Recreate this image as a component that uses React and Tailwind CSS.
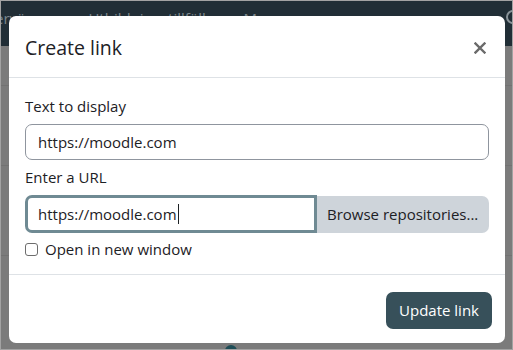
import React from "react";

// Moodle-style "Create link" modal shown over a dimmed course page
function App() {
  const font = { fontFamily: '"Open Sans", "Noto Sans", sans-serif' };

  return (
    <div
      className="relative w-[513px] h-[350px] overflow-hidden bg-[#7b7b7b] border border-[#a3a3a3]"
      style={font}
    >
      {/* Dimmed navbar behind the backdrop */}
      <div className="h-[45px] bg-[#212e36] flex items-start pt-[6px] text-[15px] text-[#7d878c] whitespace-nowrap">
        <span className="-ml-[6px]">ervägare</span>
        <span className="ml-[32px]">Utbildningstillfällen</span>
        <span className="ml-[20px]">Mer</span>
        <span className="ml-auto mr-[-8px] mt-[3px] w-[14px] h-[14px] rounded-full border-2 border-[#8a9499]" />
      </div>

      {/* Dimmed page content */}
      <div className="h-[40px] border-b border-[#727272]" />
      <div className="h-[80px] border-b border-[#727272]" />
      <div className="h-[90px] border-b border-[#727272]" />

      {/* Modal dialog */}
      <div className="absolute left-[8px] top-[15px] w-[496px] h-[327px] bg-white rounded-[7px] flex flex-col text-[#1d2125]">
        {/* Header */}
        <div className="h-[62px] shrink-0 flex items-center justify-between pl-4 pr-[19px] border-b border-[#dee2e6]">
          <h2 className="text-[19.5px] leading-none pt-[2px]">Create link</h2>
          <svg width="12" height="12" viewBox="0 0 12 12" className="mt-[2px]">
            <path d="M1.5 1.5 L10.5 10.5 M10.5 1.5 L1.5 10.5" stroke="#6a6a6a" strokeWidth="2.4" strokeLinecap="square" />
          </svg>
        </div>

        {/* Body */}
        <div className="px-4 pt-[17px] pb-[15px] border-b border-[#dee2e6] flex flex-col">
          <label className="h-[22px] text-[15px] leading-[22px]">Text to display</label>
          <div className="mt-[7px] h-[36px] w-full rounded-[7px] border border-[#8f959e] flex items-center pl-[12px] text-[15px]">
            https://moodle.com
          </div>
          <label className="mt-[6px] h-[22px] text-[15px] leading-[22px]">Enter a URL</label>
          <div className="mt-[7px] h-[38px] flex">
            <div className="w-[292px] h-full rounded-l-[7px] border-[3px] border-[#6f8a93] flex items-center pl-[10px] text-[15px]">
              https://moodle.com
              <span className="ml-[1px] w-[1px] h-[20px] bg-[#1d2125]" />
            </div>
            <div className="flex-1 h-[37px] mt-[1px] bg-[#ced4da] rounded-r-[7px] flex items-center pl-[10px] text-[15px]">
              Browse repositories...
            </div>
          </div>
          <div className="mt-[6px] h-[20px] flex items-center gap-[7px] text-[15px]">
            <span className="w-[13px] h-[13px] rounded-[3px] border border-[#6d6d6d] bg-white" />
            <span className="leading-none">Open in new window</span>
          </div>
        </div>

        {/* Footer */}
        <div className="flex-1 flex justify-end items-start pt-[17px] pr-[13px]">
          <button className="h-[37px] px-[13px] rounded-[7px] bg-[#37505a] text-white text-[15px]">
            Update link
          </button>
        </div>
      </div>

      {/* Page detail peeking below the modal */}
      <div className="absolute left-[224px] top-[344px] w-[12px] h-[12px] rounded-full bg-[#1e4d57]" />
    </div>
  );
}

export default App;
